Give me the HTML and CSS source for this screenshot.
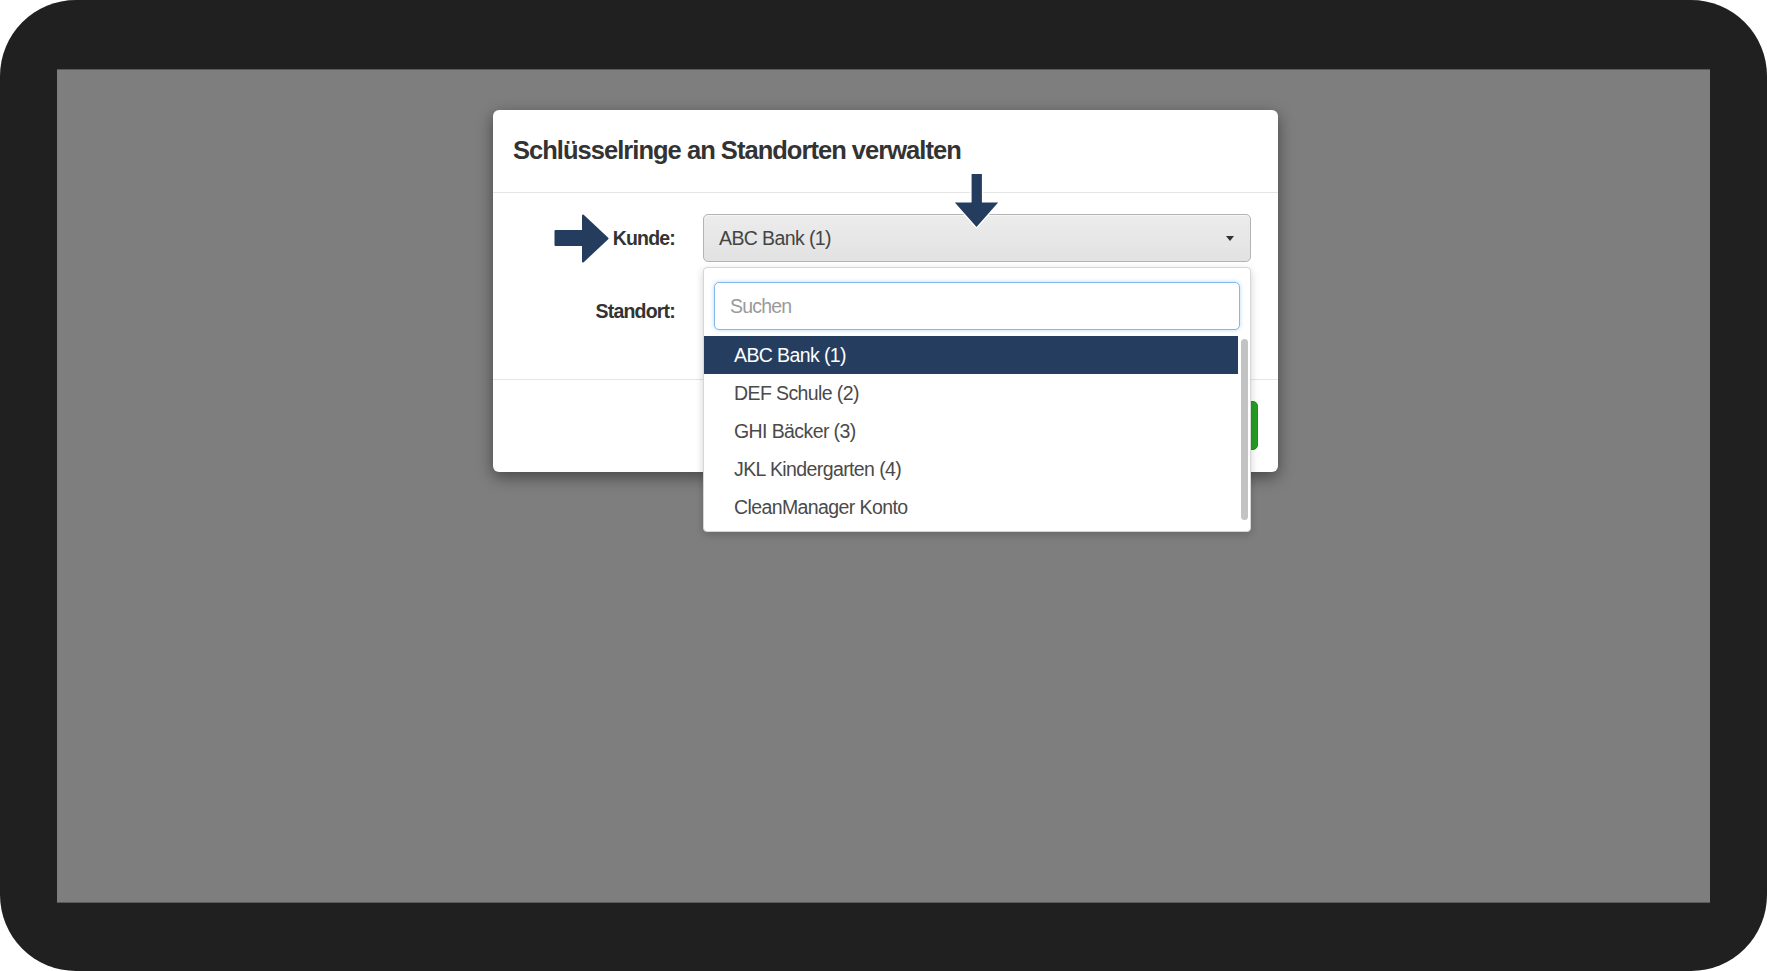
FILE: index.html
```html
<!DOCTYPE html>
<html lang="de">
<head>
<meta charset="utf-8">
<title>Schlüsselringe an Standorten verwalten</title>
<link rel="stylesheet" href="styles.css">
</head>
<body>
<div class="frame">
  <div class="screen">
    <div class="modal">
      <div class="modal-header">
        <h4 class="modal-title">Schlüsselringe an Standorten verwalten</h4>
      </div>
      <div class="modal-body">
        <label class="form-label">Kunde:</label>
        <div class="select-wrap">
          <div class="select">
            <span class="select-value">ABC Bank (1)</span>
            <span class="caret"></span>
          </div>
          <div class="dropdown">
            <div class="search-wrap">
              <input class="search" type="text" placeholder="Suchen">
            </div>
            <div class="results">
              <ul class="options">
                <li class="option option-active">ABC Bank (1)</li>
                <li class="option">DEF Schule (2)</li>
                <li class="option">GHI Bäcker (3)</li>
                <li class="option">JKL Kindergarten (4)</li>
                <li class="option">CleanManager Konto</li>
              </ul>
              <div class="scroll-track"><div class="scroll-thumb"></div></div>
            </div>
          </div>
        </div>
        <label class="form-label">Standort:</label>
        <div class="select-wrap">
          <div class="select">
            <span class="select-value">Bitte wählen</span>
            <span class="caret"></span>
          </div>
        </div>
      </div>
      <div class="modal-footer">
        <button class="btn btn-default">Abbrechen</button>
        <button class="btn btn-success">Speichern</button>
      </div>
      <svg class="arrow arrow-right" width="55" height="49" viewBox="0 0 55 49">
        <path d="M1.5 17 H29 V1.5 L53.5 24.5 L29 47.5 V31 H1.5 Z" fill="#243c5e" stroke="#243c5e" stroke-width="2" stroke-linejoin="round"/>
      </svg>
      <svg class="arrow arrow-down" width="49" height="58" viewBox="0 0 49 58">
        <path d="M19 1.5 H30.5 V30 H47.5 L24.5 56 L1.5 30 H19 Z" fill="#243c5e" stroke="#ffffff" stroke-width="1.2" stroke-linejoin="round"/>
      </svg>
    </div>
  </div>
</div>
</body>
</html>
```

FILE: styles.css
```css
* {
  box-sizing: border-box;
}

html, body {
  margin: 0;
  padding: 0;
  background: #ffffff;
}

body {
  font-family: "Liberation Sans", Arial, Helvetica, sans-serif;
  width: 1767px;
  height: 971px;
  overflow: hidden;
}

.frame {
  width: 1767px;
  height: 971px;
  background: #212021;
  border-radius: 76px;
  padding: 69px 57px 68px 57px;
}

.screen {
  width: 100%;
  height: 100%;
  background: #7e7e7e;
  box-shadow: inset 0 1px 0 #5a5a5a, inset 0 -1px 0 #5a5a5a;
  padding: 41px 0 0 436px;
}

.modal {
  position: relative;
  width: 785px;
  background: #ffffff;
  border-radius: 6px;
  box-shadow: 0 5px 16px rgba(0, 0, 0, 0.45);
}

.modal-header {
  padding: 25px 20px 27px 20px;
  border-bottom: 1px solid #e5e5e5;
}

.modal-title {
  margin: 0;
  font-size: 25.5px;
  line-height: 30px;
  font-weight: bold;
  letter-spacing: -0.97px;
  color: #333333;
}

.modal-body {
  display: grid;
  grid-template-columns: 162px 548px;
  column-gap: 28px;
  row-gap: 25px;
  align-items: center;
  padding: 21px 27px 44px 20px;
}

.form-label {
  text-align: right;
  font-size: 19.5px;
  font-weight: bold;
  letter-spacing: -0.8px;
  color: #333333;
}

.select-wrap {
  position: relative;
}

.select {
  display: flex;
  align-items: center;
  justify-content: space-between;
  height: 48px;
  padding: 0 16px 0 15px;
  border: 1px solid #b3b3b3;
  border-radius: 5px;
  background: linear-gradient(#ececec, #e2e2e2);
  box-shadow: inset 0 1px 0 #f6f6f6;
}

.select-value {
  font-size: 19.5px;
  letter-spacing: -0.6px;
  color: #444444;
}

.caret {
  width: 0;
  height: 0;
  border-left: 4.5px solid transparent;
  border-right: 4.5px solid transparent;
  border-top: 5px solid #333333;
}

.dropdown {
  position: absolute;
  z-index: 10;
  top: 53px;
  left: 0;
  right: 0;
  height: 265px;
  background: #ffffff;
  border: 1px solid #d6d6d6;
  border-radius: 4px;
  box-shadow: 0 3px 8px rgba(0, 0, 0, 0.18);
  padding: 14px 0 5px 0;
}

.search-wrap {
  padding: 0 10px;
}

.search {
  display: block;
  width: 100%;
  height: 48px;
  margin: 0;
  padding: 0 15px;
  border: 1px solid #80b9ea;
  border-radius: 5px;
  box-shadow: 0 0 4px rgba(102, 175, 233, 0.45);
  font-family: "Liberation Sans", Arial, Helvetica, sans-serif;
  font-size: 19.5px;
  letter-spacing: -0.8px;
  color: #444444;
  outline: none;
}

.search::placeholder {
  color: #9a9a9a;
}

.results {
  display: flex;
  margin-top: 6px;
}

.options {
  flex: 1;
  list-style: none;
  margin: 0;
  padding: 0;
}

.option {
  height: 38px;
  line-height: 38px;
  padding-left: 30px;
  font-size: 19.5px;
  letter-spacing: -0.6px;
  color: #4a4a4a;
}

.option-active {
  background: #253e60;
  color: #ffffff;
}

.scroll-track {
  width: 12px;
  padding: 3px 2px 0 3px;
}

.scroll-thumb {
  width: 7px;
  height: 181px;
  border-radius: 4px;
  background: #c3c3c3;
}

.modal-footer {
  display: flex;
  justify-content: flex-end;
  gap: 10px;
  padding: 21px 20px 22px 20px;
  border-top: 1px solid #e5e5e5;
}

.btn {
  height: 49px;
  padding: 0 22px;
  border-radius: 5px;
  font-family: "Liberation Sans", Arial, Helvetica, sans-serif;
  font-size: 19px;
  cursor: pointer;
}

.btn-default {
  background: #ffffff;
  border: 1px solid #cccccc;
  color: #333333;
}

.btn-success {
  background: #23a023;
  border: 1px solid #1e8e1e;
  color: #ffffff;
}

.arrow {
  position: absolute;
  z-index: 20;
  display: block;
}

.arrow-right {
  left: 61px;
  top: 104px;
}

.arrow-down {
  left: 459px;
  top: 62px;
}
```
